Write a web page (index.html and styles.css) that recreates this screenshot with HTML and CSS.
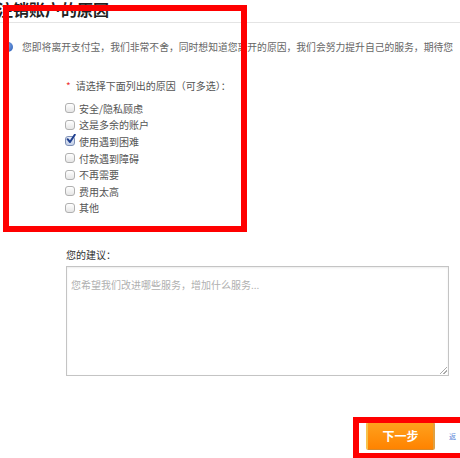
FILE: index.html
```html
<!DOCTYPE html>
<html lang="zh-CN">
<head>
<meta charset="utf-8">
<link rel="stylesheet" href="styles.css">
</head>
<body>
<div class="page">
  <h2 class="title">注销账户的原因</h2>
  <div class="intro">
    <span class="info-icon"></span>
    <span class="intro-text">您即将离开支付宝，我们非常不舍，同时想知道您离开的原因，我们会努力提升自己的服务，期待您</span>
  </div>
  <div class="form">
    <div class="required"><span class="star">*</span>请选择下面列出的原因（可多选）：</div>
    <ul class="options">
      <li><span class="cb"></span>安全/隐私顾虑</li>
      <li><span class="cb"></span>这是多余的账户</li>
      <li><span class="cb checked"><svg viewBox="0 0 10 10" width="10" height="10"><path d="M1.6 5.2 L4 8 L8.8 0.8" fill="none" stroke="#1f3f8f" stroke-width="2" stroke-linecap="round" stroke-linejoin="round"/></svg></span>使用遇到困难</li>
      <li><span class="cb"></span>付款遇到障碍</li>
      <li><span class="cb"></span>不再需要</li>
      <li><span class="cb"></span>费用太高</li>
      <li><span class="cb"></span>其他</li>
    </ul>
    <div class="suggest-label">您的建议：</div>
    <div class="textarea">
      <span class="placeholder">您希望我们改进哪些服务，增加什么服务...</span>
      <span class="grip"></span>
    </div>
    <div class="actions">
      <button class="btn-next">下一步</button>
      <span class="link">返</span>
    </div>
  </div>
  <div class="mark mark-form"></div>
  <div class="mark mark-btn"></div>
</div>
</body>
</html>
```
FILE: styles.css
```css
html, body {
  margin: 0;
  padding: 0;
  background: #fff;
}
body {
  width: 460px;
  height: 458px;
  overflow: hidden;
  font-family: "Noto Sans CJK SC", "Noto Sans", sans-serif;
}
.page {
  position: relative;
  width: 460px;
  height: 458px;
  overflow: hidden;
}
.title {
  margin: -1px 0 0 0;
  padding: 0 0 3px 0;
  font-size: 16px;
  line-height: 20px;
  font-weight: bold;
  color: #222;
  border-bottom: 1px solid #e4e4e4;
  text-indent: -3px;
  white-space: nowrap;
}
.intro {
  display: flex;
  align-items: center;
  height: 14px;
  margin-top: 17px;
  white-space: nowrap;
}
.info-icon {
  flex: none;
  width: 10px;
  height: 10px;
  margin-left: 3px;
  border-radius: 50%;
  background: radial-gradient(circle at 40% 35%, #8fb2ea, #3e6fc4 70%);
}
.intro-text {
  margin-left: 9px;
  font-size: 9.8px;
  line-height: 14px;
  color: #666;
}
.form {
  padding-left: 66px;
}
.required {
  margin-top: 25px;
  font-size: 10px;
  line-height: 14px;
  color: #555;
  white-space: nowrap;
}
.star {
  color: #e33;
  margin-right: 5px;
}
.options {
  list-style: none;
  margin: 7px 0 0 0;
  padding: 0;
}
.options li {
  display: flex;
  align-items: center;
  height: 16.6px;
  font-size: 10px;
  color: #555;
  white-space: nowrap;
}
.cb {
  flex: none;
  position: relative;
  box-sizing: border-box;
  width: 10px;
  height: 10px;
  margin-left: -1px;
  margin-right: 4px;
  border: 1px solid #b0b0b0;
  border-radius: 3px;
  background: linear-gradient(#fff, #e6e6e6);
}
.cb.checked {
  border-color: #7d8fb5;
  background: linear-gradient(#e6ecf7, #c5d1e8);
}
.cb svg {
  position: absolute;
  left: 0;
  top: -3px;
}
.suggest-label {
  margin-top: 32px;
  font-size: 10px;
  line-height: 14px;
  color: #333;
}
.textarea {
  position: relative;
  box-sizing: border-box;
  width: 383px;
  height: 110px;
  margin-top: 4px;
  border: 1px solid #c4c4c4;
  box-shadow: inset 0 1px 2px rgba(0,0,0,0.08);
  padding: 3px 4px;
}
.placeholder {
  font-size: 10px;
  line-height: 14px;
  color: #b0b0b0;
  white-space: nowrap;
}
.grip {
  position: absolute;
  right: 1px;
  bottom: 1px;
  width: 7px;
  height: 7px;
  background: linear-gradient(135deg, transparent 45%, #aaa 45%, #aaa 55%, transparent 55%, transparent 70%, #aaa 70%, #aaa 80%, transparent 80%);
}
.actions {
  display: flex;
  align-items: center;
  margin-top: 46px;
}
.btn-next {
  box-sizing: border-box;
  width: 69px;
  height: 28px;
  margin-left: 300px;
  padding: 0;
  border: 1px solid #d98a2b;
  border-left: 2px solid #f7c24a;
  border-right: 2px solid #e0a040;
  border-radius: 2px;
  background: linear-gradient(#ffa11d, #ff8300);
  color: #fff;
  font-family: "Noto Sans CJK SC", sans-serif;
  font-size: 12px;
  font-weight: bold;
  line-height: 26px;
}
.link {
  margin-left: 14px;
  font-size: 7px;
  line-height: 9px;
  color: #5a86d8;
  white-space: nowrap;
}
.mark {
  position: absolute;
  box-sizing: border-box;
  border: 6px solid #ff0000;
}
.mark-form {
  left: 3px;
  top: 5px;
  width: 244px;
  height: 227px;
}
.mark-btn {
  left: 353px;
  top: 417px;
  width: 120px;
  height: 42px;
}
```
